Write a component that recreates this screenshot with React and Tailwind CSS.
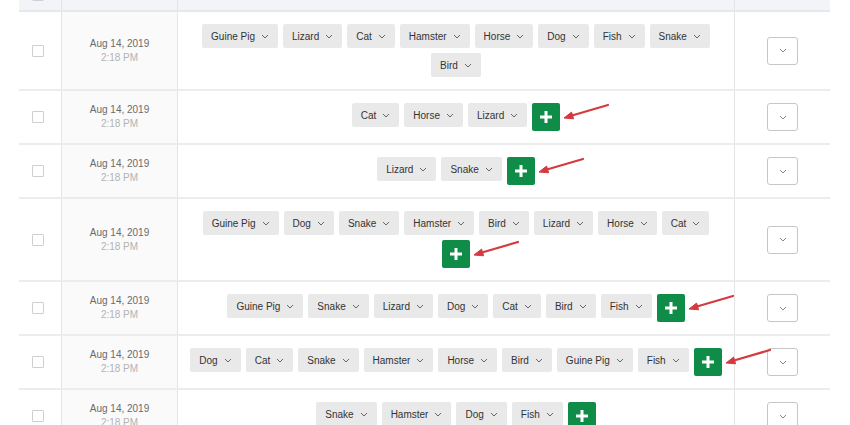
const rows = [
  { tags: ["Guine Pig", "Lizard", "Cat", "Hamster", "Horse", "Dog", "Fish", "Snake", "Bird"], plus: false },
  { tags: ["Cat", "Horse", "Lizard"], plus: true, arrow: true },
  { tags: ["Lizard", "Snake"], plus: true, arrow: true },
  { tags: ["Guine Pig", "Dog", "Snake", "Hamster", "Bird", "Lizard", "Horse", "Cat"], plus: true, arrow: true },
  { tags: ["Guine Pig", "Snake", "Lizard", "Dog", "Cat", "Bird", "Fish"], plus: true, arrow: true },
  { tags: ["Dog", "Cat", "Snake", "Hamster", "Horse", "Bird", "Guine Pig", "Fish"], plus: true, arrow: true },
  { tags: ["Snake", "Hamster", "Dog", "Fish"], plus: true, arrow: false },
];

function Chevron({ className = "" }) {
  return (
    <svg width="8" height="5" viewBox="0 0 8 5" className={className}>
      <path d="M1 1l3 3 3-3" fill="none" stroke="currentColor" strokeWidth="1" />
    </svg>
  );
}

function Tag({ label }) {
  return (
    <div className="flex h-[24px] items-center gap-[6px] rounded-[2px] bg-[#e9e9e9] pl-[9px] pr-[9px] text-[10px] text-[#333]">
      <span>{label}</span>
      <Chevron className="text-[#666]" />
    </div>
  );
}

function PlusButton({ arrow }) {
  return (
    <div className="relative">
      <button className="flex h-[28px] w-[28px] items-center justify-center rounded-[2px] bg-[#0f8c47]">
        <svg width="12" height="12" viewBox="0 0 12 12">
          <path d="M6 0v12M0 6h12" stroke="#fff" strokeWidth="3" />
        </svg>
      </button>
      {arrow && (
        <svg width="48" height="18" viewBox="0 0 48 18" className="absolute left-[30px] top-0">
          <line x1="10" y1="12.5" x2="46" y2="2" stroke="#d53a3f" strokeWidth="2.2" strokeLinecap="round" />
          <polygon points="2,15 11.6,15.8 9.6,9.1" fill="#d53a3f" stroke="#d53a3f" strokeWidth="1" strokeLinejoin="round" />
        </svg>
      )}
    </div>
  );
}

export default function App() {
  return (
    <div className="h-[425px] w-[850px] overflow-hidden bg-white font-['Liberation_Sans',Arial,sans-serif]">
      <div className="-mt-[28px] ml-[19px] w-[811px]">
        {/* header */}
        <div className="grid h-[40px] grid-cols-[43px_116px_557px_95px] border-b-2 border-[#e7e8ed] bg-[#f3f4f8] text-[11px] font-semibold text-white">
          <div className="flex items-end justify-center border-r border-[#e2e3e8] pb-[9px] pr-[5px]">
            <div className="h-[12px] w-[12px] rounded-[1px] border border-[#cfd0d4] bg-[#f7f7f9]" />
          </div>
          <div className="flex items-end justify-center border-r border-[#e2e3e8] pb-[9px]">Recorded Date</div>
          <div className="flex items-end justify-center gap-2 border-r border-[#e2e3e8] pb-[9px]">
            <span>Please select your favorite animals from the list</span>
          </div>
          <div className="flex items-end justify-center pb-[9px]">Actions</div>
        </div>

        {rows.map((row, i) => (
          <div key={i} className="grid grid-cols-[43px_116px_557px_95px] border-b-2 border-[#ececec]">
            <div className="flex items-center justify-center border-r border-[#e4e4e4] pr-[5px]">
              <div className="h-[12px] w-[12px] rounded-[1px] border border-[#cfcfcf] bg-white" />
            </div>
            <div className="flex flex-col items-center justify-center border-r border-[#e4e4e4] bg-[#fafafa] text-[10px] leading-[14px]">
              <span className="text-[#6b6b6b]">Aug 14, 2019</span>
              <span className="text-[#b3b3b3]">2:18 PM</span>
            </div>
            <div className="flex flex-wrap content-center items-start justify-center gap-[5px] border-r border-[#e4e4e4] px-[11px] py-3">
              {row.tags.map((t) => (
                <Tag key={t} label={t} />
              ))}
              {row.plus && <PlusButton arrow={row.arrow} />}
            </div>
            <div className="flex items-center justify-center">
              <button className="flex h-[28px] w-[31px] items-center justify-center rounded-[3px] border border-[#c6c6c6] bg-white">
                <Chevron className="text-[#888]" />
              </button>
            </div>
          </div>
        ))}
      </div>
    </div>
  );
}
